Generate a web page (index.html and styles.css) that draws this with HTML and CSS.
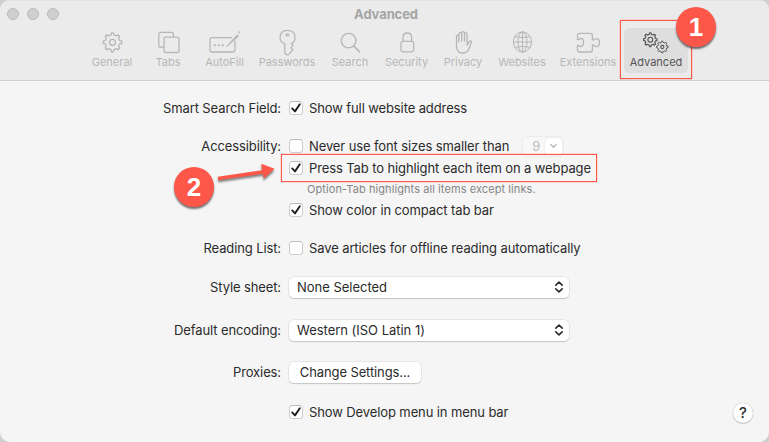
FILE: index.html
```html
<!DOCTYPE html>
<html lang="en">
<head>
<meta charset="utf-8">
<title>Advanced</title>
<link rel="stylesheet" href="styles.css">
</head>
<body>
<div class="window">
  <header class="titlebar">
    <div class="top">
      <div class="lights"><i></i><i></i><i></i></div>
      <h1>Advanced</h1>
    </div>
    <nav class="tools">
      <div class="tool"><svg width="24" height="28" viewBox="0 0 24 28"><path id="gear" d="M21.7 13.1V15.5L19.6 15.9L18.6 18.2L19.8 20L18.1 21.8L16.3 20.6L14 21.6L13.3 23.8H11.5L10.9 21.6L8.6 20.6L6.8 21.8L5.2 20L6.3 18.2L5.3 15.9L3.2 15.3V13.1L5.3 12.6L6.3 10.3L5.2 8.4L6.8 6.8L8.6 7.9L10.9 7L11.5 4.8H13.3L14 7L16.3 7.9L18.1 6.8L19.8 8.4L18.6 10.3L19.6 12.6Z"/><circle cx="12.5" cy="14.3" r="3"/></svg><span>General</span></div>
      <div class="tool"><svg width="24" height="28" viewBox="0 0 24 28"><path d="M7.5 19.2H4.6Q2.8 19.2 2.8 17.4V6.2Q2.8 4.4 4.6 4.4H15.6Q17.4 4.4 17.4 6.2V8.5"/><rect x="8" y="9.2" width="15" height="15.3" rx="1.8"/></svg><span>Tabs</span></div>
      <div class="tool"><svg width="32" height="28" viewBox="0 0 32 28"><path d="M22.5 9.6H3.2Q1 9.6 1 11.8V21.8Q1 24 3.2 24H23.8Q26 24 26 21.8V13"/><path class="solid" d="M18 17.6L28 6.4L30 8L20.3 17L17.3 19.3Z"/><path d="M29.8 4.7L30.5 4"/><path class="dots" d="M5.6 17.2H6M9.6 17.2H10M13.6 17.2H14"/></svg><span>AutoFill</span></div>
      <div class="tool"><svg width="24" height="28" viewBox="0 0 24 28"><path d="M9.8 15.7Q5 14 5 9.4Q5 2.4 12.5 2.4Q20 2.4 20 9.4Q20 13.5 16.4 15.5L18 17.4L15.8 19.6L17.8 21.8L13.5 26.6Q12 27.4 9.8 25.2Z"/><ellipse cx="12.4" cy="6.9" rx="1.5" ry="1"/></svg><span>Passwords</span></div>
      <div class="tool"><svg width="24" height="28" viewBox="0 0 24 28"><circle cx="10.6" cy="12.6" r="7.3"/><path class="thick" d="M15.9 18L21.2 23.6"/></svg><span>Search</span></div>
      <div class="tool"><svg width="24" height="28" viewBox="0 0 24 28"><rect x="6" y="13.3" width="12.6" height="10.6" rx="1.8"/><path d="M8 13V9.5Q8 5 12.3 5T16.6 9.5V13"/></svg><span>Security</span></div>
      <div class="tool"><svg width="24" height="28" viewBox="0 0 24 28"><path d="M5.5 16V8.6Q5.5 7.2 6.7 7.2T7.9 8.6V14V6Q7.9 4.6 9.3 4.6T10.7 6V13V5.2Q10.7 3.6 12.1 3.6T13.5 5.2V13V6.2Q13.5 4.8 14.8 4.8T16.1 6.2V17.2L18 14Q19.4 12.2 20.6 13.4L18.5 19.7Q16.7 25 11.8 25Q5.5 25 5.5 18Z"/></svg><span>Privacy</span></div>
      <div class="tool"><svg width="24" height="28" viewBox="0 0 24 28"><g class="thin"><ellipse cx="12.5" cy="14" rx="9.1" ry="10.1"/><ellipse cx="12.5" cy="14" rx="4.5" ry="10.1"/><path d="M12.5 4V24M3.4 14H21.6M5 8.7Q12.5 11 20 8.7M5 19.3Q12.5 17 20 19.3"/></g></svg><span>Websites</span></div>
      <div class="tool"><svg width="26" height="28" viewBox="0 0 26 28"><path d="M2.5 10.4V7.5Q2.5 5.4 4.6 5.4H15.3Q17.4 5.4 17.4 7.5V11.8H19Q19.4 10.6 21.4 10.6Q24.5 10.6 24.5 14.6T21.4 18.5Q19.4 18.5 19 17.2H17.4V21.8Q17.4 24 15.3 24H4.6Q2.5 24 2.5 21.8V17.4H4Q4.5 18.7 6 18.5Q8.5 18.2 8.5 14.3T6 10.5Q4.5 10.3 4 11.7H2.5Z"/></svg><span>Extensions</span></div>
      <div class="tool active"><svg width="30" height="28" viewBox="0 0 30 28"><use href="#gear" class="gear" transform="translate(9.3 11.7) scale(.73) translate(-12.5 -14.3)"/><circle cx="9.3" cy="11.7" r="2.4"/><use href="#gear" class="gear" transform="translate(21.3 19) scale(.62) translate(-12.5 -14.3)"/><circle cx="21.3" cy="19" r="1.6"/></svg><span>Advanced</span></div>
    </nav>
  </header>

  <main class="form">
    <div class="row r1"><label>Smart Search Field:</label><i class="check"><svg viewBox="0 0 14 14"><path d="M3.2 7.4L6 10.4L10.8 3.2"/></svg></i><span>Show full website address</span></div>
    <div class="row r2"><label>Accessibility:</label><i class="check"></i><span>Never use font sizes smaller than</span>
      <div class="combo"><span>9</span><i><svg viewBox="0 0 10 6"><path d="M1.8 1.2L5 4.4L8.2 1.2"/></svg></i></div></div>
    <div class="row r3"><label></label><i class="check"><svg viewBox="0 0 14 14"><path d="M3.2 7.4L6 10.4L10.8 3.2"/></svg></i><span>Press Tab to highlight each item on a webpage</span></div>
    <div class="row r4"><label></label><small>Option-Tab highlights all items except links.</small></div>
    <div class="row r5"><label></label><i class="check"><svg viewBox="0 0 14 14"><path d="M3.2 7.4L6 10.4L10.8 3.2"/></svg></i><span>Show color in compact tab bar</span></div>
    <div class="row r6"><label>Reading List:</label><i class="check"></i><span>Save articles for offline reading automatically</span></div>
    <div class="row r7"><label>Style sheet:</label><div class="select"><span>None Selected</span><svg viewBox="0 0 10 12"><path d="M1.8 4.2L5 1.2L8.2 4.2M1.8 7.8L5 10.8L8.2 7.8"/></svg></div></div>
    <div class="row r8"><label>Default encoding:</label><div class="select"><span>Western (ISO Latin 1)</span><svg viewBox="0 0 10 12"><path d="M1.8 4.2L5 1.2L8.2 4.2M1.8 7.8L5 10.8L8.2 7.8"/></svg></div></div>
    <div class="row r9"><label>Proxies:</label><div class="button">Change Settings...</div></div>
    <div class="row r10"><label></label><i class="check"><svg viewBox="0 0 14 14"><path d="M3.2 7.4L6 10.4L10.8 3.2"/></svg></i><span>Show Develop menu in menu bar</span></div>
  </main>
  <div class="help">?</div>
</div>

<div class="frame frame-tab"></div>
<div class="frame frame-option"></div>
<svg class="arrow" width="64" height="28" viewBox="0 0 64 28"><path d="M3.8 14.7L48 8.3L47.3 1.8L60.5 6.8L49.7 16.8L48.9 11.8L4.2 18.2Z"/></svg>
<div class="badge one">1</div>
<div class="badge two">2</div>
</body>
</html>
```
FILE: styles.css
```css
* { box-sizing: border-box; }
body {
  margin: 0;
  width: 769px;
  height: 442px;
  overflow: hidden;
  position: relative;
  background: #cfcfcf;
  font: 13px/20px Inter, "Liberation Sans", sans-serif;
  letter-spacing: -0.11px;
  color: #2b2b2b;
}
h1, i { margin: 0; font-style: normal; }
svg { fill: none; stroke: currentColor; stroke-width: 1.3; stroke-linejoin: round; stroke-linecap: round; display: block; }
.window {
  height: 442px;
  border-radius: 10px;
  overflow: hidden;
  background: #f5f5f5;
  position: relative;
}
.titlebar {
  height: 81px;
  background: #ebebeb;
  border-bottom: 1px solid #d0d0d0;
  border-top: 1px solid #e2e2e2;
}
.top { height: 27px; display: grid; grid-template-columns: 84px 604px 81px; }
.lights { display: flex; gap: 8px; padding: 7px 0 0 7px; }
.lights i { width: 12px; height: 12px; border-radius: 50%; background: #cfcfcf; border: 1px solid #b9b9b9; }
h1 { font-size: 13px; line-height: 26px; font-weight: 700; color: #a5a5a5; text-align: center; letter-spacing: -0.1px; }
.tools {
  display: grid;
  grid-template-columns: 56px 56px 57px 68px 58px 55px 58px 60px 72px 64px;
  padding-left: 84px;
}
.tool {
  height: 45px;
  display: flex;
  flex-direction: column;
  align-items: center;
  color: #b7b7b7;
  font-size: 11px;
  line-height: 13px;
  letter-spacing: 0;
  white-space: nowrap;
}
.tool svg { flex: none; }
.tool.active { background: #dedede; border-radius: 5px; color: #555; }
.active svg { stroke-width: 1.1; }
.gear { stroke-width: 1.6; }
.solid { fill: currentColor; stroke: none; }
.dots { stroke-width: 2; }
.thick { stroke-width: 1.8; }
.thin { stroke-width: 1; }

.form { padding-top: 16px; }
.row { height: 22px; display: flex; align-items: center; white-space: nowrap; }
.row label { width: 281px; margin-right: 8px; text-align: right; flex: none; }
.r2 { margin-top: 16px; }
.r4 { height: 20px; }
.r6 { margin-top: 16px; }
.r7 { margin-top: 17.4px; }
.r8 { margin-top: 21px; }
.r9 { margin-top: 20px; }
.r10 { margin-top: 17.6px; }
.check {
  width: 14px; height: 14px; flex: none;
  margin-right: 6px;
  border: 1px solid #cecece;
  border-top-color: #bcbcbc;
  border-radius: 3.5px;
  background: #fff;
}
.check svg { width: 14px; height: 14px; margin: -1px; stroke: #1f1f1f; stroke-width: 1.9; }
small { font-size: 11px; color: #858585; margin-left: 18px; letter-spacing: 0.08px; line-height: 21px; }
.row small { margin-top: 1px; }
.combo {
  width: 42px; height: 21px;
  margin-left: 13px;
  border: 1px solid #ececec;
  border-radius: 5px;
  background: #f8f8f8;
  display: flex; align-items: center; justify-content: space-between;
  padding-left: 9px;
  color: #bcbcbc;
}
.combo i { width: 17px; height: 17px; border-radius: 4px; background: #fff; box-shadow: 0 0 1px #bbb; display: grid; place-items: center; margin-right: 1px; }
.combo svg { width: 9px; height: 6px; stroke: #b5b5b5; stroke-width: 1.5; }
.select, .button {
  height: 21px;
  border-radius: 5px;
  background: #fff;
  box-shadow: 0 0 0 0.5px #d8d8d8, 0 1px 1px #b4b4b4;
}
.select { width: 280px; display: flex; align-items: center; justify-content: space-between; padding: 0 5px 0 8px; letter-spacing: -0.02px; }
.select svg { width: 10px; height: 12px; stroke-width: 1.6; }
.button { width: 132px; text-align: center; }
.help {
  position: absolute; left: 733px; top: 403px;
  width: 20px; height: 20px; border-radius: 50%;
  background: #fff; box-shadow: 0 0 1px #999, 0 1px 1px #c4c4c4;
  text-align: center; font-size: 15px; font-weight: 500;
}

.frame { position: absolute; border: 1px solid #fb5a4b; box-shadow: 0 0 1px #fb5a4b; }
.frame-tab { left: 620px; top: 20px; width: 72px; height: 59px; }
.frame-option { left: 281px; top: 154px; width: 316px; height: 28px; }
.badge {
  position: absolute;
  width: 40px; height: 40px; border-radius: 50%;
  background: #fd5749;
  box-shadow: 0 2px 2px rgba(0,0,0,.55);
  color: #fff;
  font: 700 26px/41px "Liberation Sans", sans-serif;
  text-align: center;
}
.one { left: 676px; top: 7px; }
.two { left: 174px; top: 167px; }
.arrow { position: absolute; left: 214px; top: 162px; fill: #fd5749; stroke: none; filter: drop-shadow(0 2px 1px rgba(0,0,0,.5)); }
```
